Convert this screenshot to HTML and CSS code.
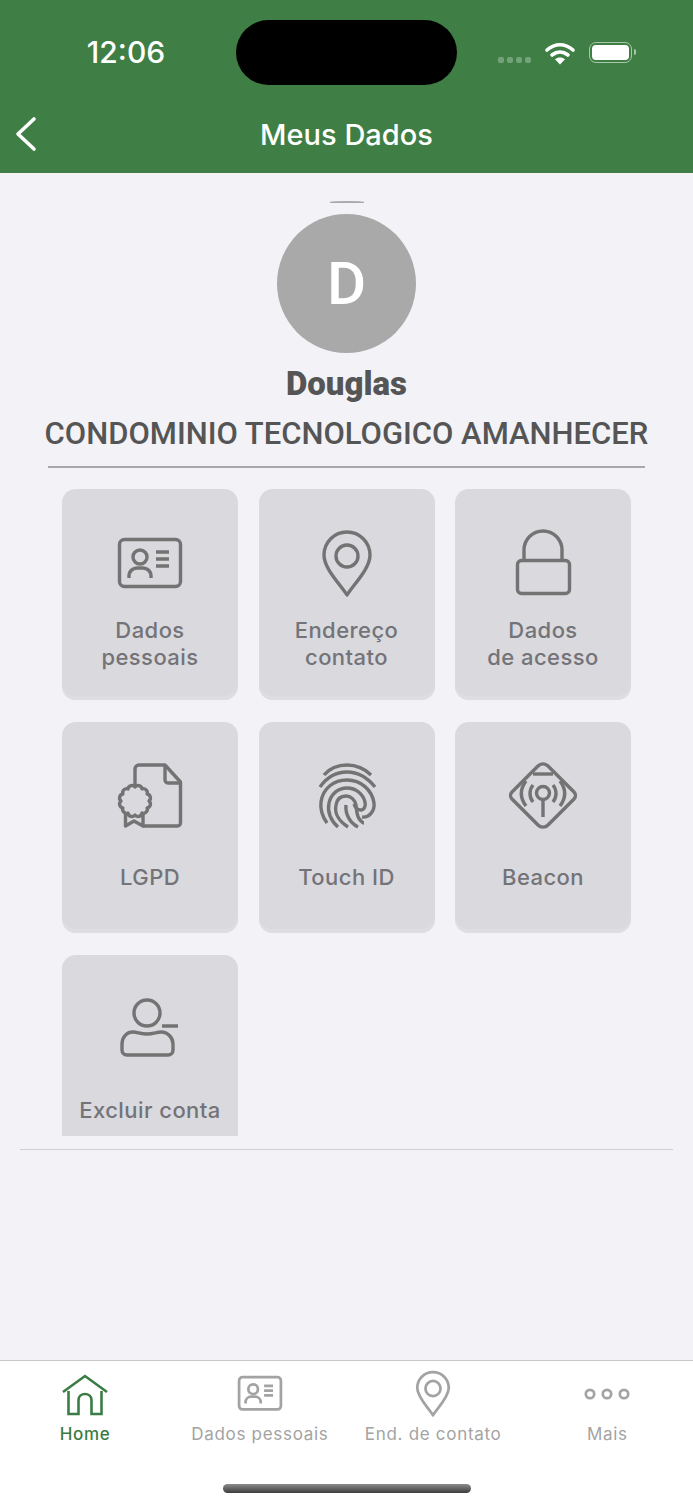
FILE: index.html
```html
<!DOCTYPE html>
<html lang="pt-BR">
<head>
  <meta charset="UTF-8" />
  <meta name="viewport" content="width=device-width, initial-scale=1.0"/>
  <title>Meus Dados</title>
  <link rel="stylesheet" href="styles.css">
</head>
<body>
  <svg class="sprites" width="0" height="0" aria-hidden="true">
    <symbol id="i-card" viewBox="0 0 70 70">
      <rect x="4.5" y="10.5" width="61" height="47" rx="5"/>
      <circle cx="25" cy="28" r="7"/>
      <path d="M14 49v-2c0-5 4-8 8-8h6c4 0 8 3 8 8v2"/>
      <path d="M41 23h13M41 30h13M41 37h13"/>
    </symbol>
    <symbol id="i-pin" viewBox="0 0 70 70">
      <path d="M35 66 C29 56 12 40 12 26 A23 23 0 0 1 58 26 C58 40 41 56 35 66Z" stroke-linejoin="round"/>
      <circle cx="35" cy="27" r="11"/>
    </symbol>
    <symbol id="i-lock" viewBox="0 0 70 70">
      <rect x="9.5" y="31.5" width="52" height="33" rx="4"/>
      <path d="M16 31V21a19 19 0 0 1 38 0v10"/>
    </symbol>
    <symbol id="i-lgpd" viewBox="0 0 70 70">
      <path d="M20 25V7a4 4 0 0 1 4-4h26l15.500 17v41a3 3 0 0 1-3 3H28" stroke-linejoin="round"/>
      <path d="M50 4v14a3 3 0 0 0 3 3h12"/>
      <path d="M20 25A4 4 0 0 1 27 26.900A4 4 0 0 1 32.100 32A4 4 0 0 1 34 39A4 4 0 0 1 32.100 46A4 4 0 0 1 27 51.100A4 4 0 0 1 20 53A4 4 0 0 1 13 51.100A4 4 0 0 1 7.900 46A4 4 0 0 1 6 39A4 4 0 0 1 7.900 32A4 4 0 0 1 13 26.900A4 4 0 0 1 20 25Z" stroke-linejoin="round"/>
      <path d="M10.500 51v13l8.500-5 9 5V52" stroke-linejoin="round"/>
    </symbol>
    <symbol id="i-touch" viewBox="0 0 70 70">
      <path d="M12 13C18 6 26 3 35 3s17 3 24 10"/>
      <path d="M8 25C15 15 24 10 35 10s20 5 28 15"/>
      <path d="M15 61C10 54 8 48 9 40 11 26 22 18 35 18c14 0 25 10 27 23 1 8-5 15-12 14"/>
      <path d="M26 65C19 59 15 50 17 41 19 32 26 26 35 26s16 6 18 14c1 4-1 8-4 8-4 0-6-3-7-6"/>
      <path d="M36 65C28 60 22 52 24 43 25 37 29 34 34 34s9 4 10 9c1 6 0 10 4 15 2 2 3 3 4 3"/>
      <path d="M46 65C38 61 33 52 34 43"/>
    </symbol>
    <symbol id="i-beacon" viewBox="0 0 70 70">
      <path d="M30 4a7 7 0 0 1 10 0L66 30a5 5 0 0 1 0 7L40 63a7 7 0 0 1-10 0L4 37a5 5 0 0 1 0-7Z" stroke-linejoin="round"/>
      <path d="M25 12h20"/>
      <circle cx="35" cy="31" r="6.500"/>
      <path d="M35 38v17"/>
      <path d="M25 23c-4 5-4 12 0 17M45 23c4 5 4 12 0 17"/>
      <path d="M18 19c-6 8-6 17 0 25M52 19c6 8 6 17 0 25"/>
    </symbol>
    <symbol id="i-user" viewBox="0 0 70 70">
      <circle cx="32" cy="18" r="13"/>
      <path d="M18 37c4 0 8 2 14 2s10-2 14-2c7 0 12 6 12 12v6c0 3-2 5-5 5H12c-3 0-5-2-5-5v-6c0-6 4-12 11-12Z" stroke-linejoin="round"/>
      <path d="M47 31h16" stroke-width="3.500"/>
    </symbol>
  </svg>

  <div class="tela">
    <header class="topo">
      <div class="status">
        <span class="hora">12:06</span>
        <div class="ilha"></div>
        <div class="status-icones">
          <span class="sinal"><i></i><i></i><i></i><i></i></span>
          <svg class="wifi" width="32" height="24" viewBox="0 0 32 24">
            <path d="M3 9C11 2 21 2 29 9M8 14c5-4 11-4 16 0" fill="none" stroke="#fff" stroke-width="3.600" stroke-linecap="round"/>
            <path d="M11 18.200c3-2.400 7-2.400 10 0L16 23.500Z" fill="#fff"/>
          </svg>
          <span class="bateria"><b></b></span>
        </div>
      </div>
      <nav class="barra">
        <svg class="voltar" width="24" height="36" viewBox="0 0 24 36">
          <path d="M20 3L4 18l16 15" fill="none" stroke="#fff" stroke-width="3.600" stroke-linecap="round" stroke-linejoin="round"/>
        </svg>
        <h1>Meus Dados</h1>
        <span></span>
      </nav>
    </header>

    <main class="conteudo">
      <div class="arco"></div>
      <div class="avatar">D</div>
      <h2 class="nome">Douglas</h2>
      <p class="condominio">CONDOMINIO TECNOLOGICO AMANHECER</p>
      <hr class="linha">

      <div class="grade">
        <a class="card"><svg class="icone"><use href="#i-card"/></svg><span>Dados<br>pessoais</span></a>
        <a class="card"><svg class="icone"><use href="#i-pin"/></svg><span>Endereço<br>contato</span></a>
        <a class="card"><svg class="icone"><use href="#i-lock"/></svg><span>Dados<br>de acesso</span></a>
        <a class="card"><svg class="icone"><use href="#i-lgpd"/></svg><span>LGPD</span></a>
        <a class="card"><svg class="icone"><use href="#i-touch"/></svg><span>Touch ID</span></a>
        <a class="card"><svg class="icone"><use href="#i-beacon"/></svg><span>Beacon</span></a>
        <a class="card"><svg class="icone"><use href="#i-user"/></svg><span>Excluir conta</span></a>
      </div>

      <hr class="divisor">
    </main>

    <footer class="abas">
      <div class="abas-itens">
        <a class="aba ativa">
          <svg class="aba-icone" viewBox="0 0 48 48">
            <path d="M2 22L24 6l22 16"/>
            <path d="M7.500 21v23h10V30c0-8 13-8 13 0v14h10V21"/>
          </svg>
          <span>Home</span>
        </a>
        <a class="aba"><svg class="aba-icone"><use href="#i-card"/></svg><span>Dados pessoais</span></a>
        <a class="aba"><svg class="aba-icone"><use href="#i-pin"/></svg><span>End. de contato</span></a>
        <a class="aba mais">
          <svg class="aba-icone pontos" viewBox="0 0 48 48">
            <circle cx="7" cy="24" r="4.200"/><circle cx="24" cy="24" r="4.200"/><circle cx="41" cy="24" r="4.200"/>
          </svg>
          <span>Mais</span>
        </a>
      </div>
      <div class="indicador"></div>
    </footer>
  </div>
</body>
</html>
```

FILE: styles.css
```css
body {
  margin: 0;
  font-family: Inter, "Noto Sans", Arial, sans-serif;
  background-color: #f2f2f7;
}

.sprites {
  display: block;
}

.tela {
  display: flex;
  flex-direction: column;
  height: 1500px;
  overflow: hidden;
}

/* topo verde */
.topo {
  height: 173px;
  background-color: #3f7f46;
  color: #fff;
}

.status {
  display: grid;
  grid-template-columns: 236px 221px 236px;
  padding-top: 20px;
}

.hora {
  align-self: center;
  padding-bottom: 2px;
  padding-left: 16px;
  text-align: center;
  font-size: 30px;
  font-weight: 500;
}

.ilha {
  height: 65px;
  background-color: #000;
  border-radius: 33px;
}

.status-icones {
  display: flex;
  align-items: center;
  padding-left: 41px;
}

.sinal {
  display: flex;
  gap: 3px;
  margin-top: 15px;
  margin-right: 13px;
}

.sinal i {
  width: 6px;
  height: 6px;
  border-radius: 2px;
  background-color: #74a37a;
}

.wifi {
  margin-right: 13px;
}

.bateria {
  display: block;
  position: relative;
  width: 43px;
  height: 21px;
  padding: 2px;
  box-sizing: border-box;
  border: 1.5px solid #a9c7ac;
  border-radius: 7px;
}

.bateria b {
  display: block;
  height: 100%;
  background-color: #fff;
  border-radius: 4px;
}

.bateria::after {
  content: "";
  position: absolute;
  right: -5px;
  top: 6px;
  width: 2px;
  height: 6px;
  background-color: #a9c7ac;
  border-radius: 0 2px 2px 0;
}

.barra {
  display: grid;
  grid-template-columns: 1fr auto 1fr;
  align-items: center;
  height: 68px;
  margin-top: 15px;
  padding-left: 14px;
  padding-right: 14px;
}

.barra h1 {
  margin: 0;
  font-size: 29px;
  font-weight: 500;
}

/* conteudo */
.conteudo {
  flex: 1;
  display: flex;
  flex-direction: column;
  align-items: center;
  padding-top: 28px;
  box-sizing: border-box;
}

.arco {
  width: 34px;
  height: 2px;
  background-color: #a9a9a9;
  border-radius: 50% 50% 0 0;
}

.avatar {
  width: 139px;
  height: 139px;
  margin-top: 11px;
  border-radius: 50%;
  background-color: #a9a9a9;
  color: #fff;
  display: flex;
  align-items: center;
  justify-content: center;
  font-family: Roboto, Arial, sans-serif;
  font-size: 60px;
  font-weight: 500;
}

.nome {
  margin: 14px 0 0;
  height: 34px;
  line-height: 34px;
  font-family: Roboto, Arial, sans-serif;
  font-size: 33px;
  font-weight: 900;
  color: #555;
}

.condominio {
  margin: 15px 0 0;
  height: 36px;
  line-height: 36px;
  font-family: Roboto, Arial, sans-serif;
  font-size: 31px;
  font-weight: 500;
  color: #555;
  white-space: nowrap;
}

.linha {
  width: 597px;
  height: 2px;
  margin: 14px 0 0;
  border: none;
  background-color: #a9a9ad;
}

.grade {
  display: grid;
  grid-template-columns: repeat(3, 176px);
  column-gap: 20.5px;
  row-gap: 22px;
  height: 647px;
  margin-top: 21px;
  overflow: hidden;
  align-content: start;
}

.card {
  display: flex;
  flex-direction: column;
  align-items: center;
  height: 211px;
  padding: 40px 0 11px;
  box-sizing: border-box;
  border-radius: 14px;
  background-color: #d9d9de;
  box-shadow: inset 0 -4px 0 #dedee2;
  color: #737378;
}

.icone {
  width: 70px;
  height: 70px;
  flex-shrink: 0;
  fill: none;
  stroke: #737373;
  stroke-width: 3.4;
}

.card span {
  flex: 1;
  display: flex;
  align-items: center;
  text-align: center;
  font-size: 22px;
  line-height: 27px;
  font-weight: 500;
  letter-spacing: 0.45px;
}

.divisor {
  width: 653px;
  height: 1px;
  margin: 13px 0 0;
  border: none;
  background-color: #d0d0d4;
}

/* abas de baixo */
.abas {
  height: 140px;
  box-sizing: border-box;
  background-color: #fff;
  border-top: 1px solid #c8c8cc;
  display: flex;
  flex-direction: column;
  align-items: center;
}

.abas-itens {
  width: 100%;
  display: grid;
  grid-template-columns: repeat(4, 1fr);
  padding-top: 9px;
}

.aba {
  display: flex;
  flex-direction: column;
  align-items: center;
  color: #a3a3a3;
  font-size: 17px;
  line-height: 22px;
  letter-spacing: 0.7px;
}

.aba span {
  margin-top: 5px;
}

.aba-icone {
  width: 48px;
  height: 48px;
  fill: none;
  stroke: #a3a3a3;
  stroke-width: 4;
}

.pontos {
  stroke-width: 2.7;
}

.mais {
  padding-left: 2px;
}

.ativa {
  padding-right: 3px;
  color: #3a7d44;
  font-weight: 500;
}

.ativa .aba-icone {
  stroke: #3a7d44;
  stroke-width: 2.6;
}

.indicador {
  width: 248px;
  height: 9px;
  margin-top: 39px;
  border-radius: 5px;
  background: linear-gradient(#8c8c8c, #3c3c3c);
}
```
